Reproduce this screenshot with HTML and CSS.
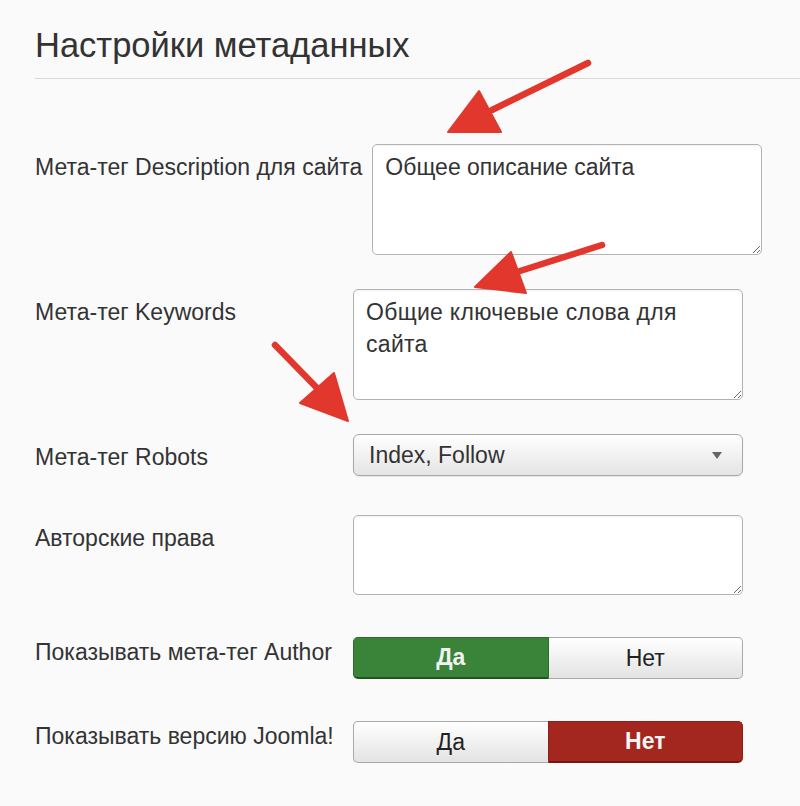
FILE: index.html
```html
<!DOCTYPE html>
<html lang="ru">
<head>
<meta charset="utf-8">
<title>Настройки метаданных</title>
<link rel="stylesheet" href="styles.css">
</head>
<body>
<div class="page">
  <h2 class="title">Настройки метаданных</h2>
  <form class="form">
    <div class="row row-desc">
      <label class="lbl">Мета-тег Description для сайта</label>
      <textarea class="ta ta-tall" readonly>Общее описание сайта</textarea>
    </div>
    <div class="row row-keys">
      <label class="lbl">Мета-тег Keywords</label>
      <textarea class="ta ta-tall ta-spaced" readonly>Общие ключевые слова для сайта</textarea>
    </div>
    <div class="row row-robots">
      <label class="lbl">Мета-тег Robots</label>
      <div class="select"><span class="select-text">Index, Follow</span><span class="caret"></span></div>
    </div>
    <div class="row row-rights">
      <label class="lbl">Авторские права</label>
      <textarea class="ta ta-short" readonly></textarea>
    </div>
    <div class="row row-toggle">
      <label class="lbl lbl-toggle">Показывать мета-тег Author</label>
      <div class="toggle">
        <span class="btn btn-yes-on">Да</span>
        <span class="btn btn-off">Нет</span>
      </div>
    </div>
    <div class="row row-toggle row-last">
      <label class="lbl lbl-toggle">Показывать версию Joomla!</label>
      <div class="toggle">
        <span class="btn btn-off">Да</span>
        <span class="btn btn-no-on">Нет</span>
      </div>
    </div>
  </form>
  <svg class="arrows" width="800" height="806" viewBox="0 0 800 806" aria-hidden="true">
    <g fill="#e2372d" stroke="#e2372d" stroke-linejoin="round">
      <line x1="588" y1="63" x2="492" y2="110" stroke-width="6.5" stroke-linecap="round"/>
      <polygon points="448,132 479,91 501,132" stroke-width="2"/>
      <line x1="602" y1="245" x2="520" y2="271" stroke-width="6.5" stroke-linecap="round"/>
      <polygon points="475,287 511,252 526,293" stroke-width="2"/>
      <line x1="275" y1="345" x2="318" y2="389" stroke-width="6.5" stroke-linecap="round"/>
      <polygon points="348,421 300,403 334,373" stroke-width="2"/>
    </g>
  </svg>
</div>
</body>
</html>
```
FILE: styles.css
```css
html, body {
  margin: 0;
  padding: 0;
  background: #fafafa;
}
body {
  font-family: "Liberation Sans", Arial, sans-serif;
  color: #333;
}
.page {
  position: relative;
  width: 800px;
  height: 806px;
  padding-left: 35px;
  box-sizing: border-box;
  overflow: hidden;
}
.title {
  margin: 0;
  padding: 25px 0 13px;
  font-size: 34.5px;
  line-height: 40px;
  font-weight: normal;
  color: #333;
  border-bottom: 1px solid #d9d9d9;
}
.form {
  padding-top: 65px;
}
.row {
  display: flex;
  align-items: flex-start;
  gap: 10px;
}
.row-desc, .row-keys { margin-bottom: 34px; }
.row-robots { margin-bottom: 39px; }
.row-rights { margin-bottom: 42px; }
.row-toggle { margin-bottom: 42px; }
.lbl {
  flex: 0 0 auto;
  min-width: 308px;
  font-size: 23px;
  line-height: 32px;
  padding-top: 7px;
  color: #333;
}
.lbl-toggle {
  padding-top: 0;
  line-height: 30px;
}
.ta {
  box-sizing: border-box;
  width: 390px;
  margin: 0;
  border: 1px solid #b3b3b3;
  border-radius: 5px;
  background: #fff;
  font-family: "Liberation Sans", Arial, sans-serif;
  font-size: 23px;
  line-height: 32px;
  color: #333;
  padding: 6px 12px 5px;
  resize: both;
  outline: none;
  box-shadow: inset 0 1px 2px rgba(0,0,0,0.06);
}
.ta-spaced { letter-spacing: 0.3px; }
.ta-tall { height: 111px; }
.ta-short { height: 80px; }
.select {
  box-sizing: border-box;
  width: 390px;
  height: 42px;
  display: flex;
  align-items: center;
  justify-content: space-between;
  padding: 0 20px 0 15px;
  border: 1px solid #a6a6a6;
  border-radius: 6px;
  background: linear-gradient(#ffffff, #e4e4e4);
  box-shadow: 0 1px 1px rgba(0,0,0,0.08);
}
.select-text {
  font-size: 23px;
  color: #333;
}
.caret {
  width: 0;
  height: 0;
  border-left: 5px solid transparent;
  border-right: 5px solid transparent;
  border-top: 7px solid #666;
}
.toggle {
  display: flex;
  width: 390px;
  height: 42px;
}
.btn {
  flex: 1 1 0;
  display: flex;
  align-items: center;
  justify-content: center;
  font-size: 23px;
  box-sizing: border-box;
}
.btn:first-child { border-radius: 5px 0 0 5px; }
.btn:last-child { border-radius: 0 5px 5px 0; }
.btn-off {
  background: linear-gradient(#ffffff, #e3e3e3);
  border: 1px solid #a9a9a9;
  color: #222;
}
.btn-off:first-child { border-right: none; }
.btn-off:last-child { border-left: none; }
.btn-yes-on {
  background: #398439;
  border: 1px solid #2c6c2c;
  border-bottom: 2px solid #1f541f;
  color: #f2f2f2;
  font-weight: bold;
}
.btn-no-on {
  background: #a3271f;
  border: 1px solid #8e1f18;
  border-bottom: 2px solid #761710;
  color: #f5f5f5;
  font-weight: bold;
}
.arrows {
  position: absolute;
  left: 0;
  top: 0;
  pointer-events: none;
}
```
